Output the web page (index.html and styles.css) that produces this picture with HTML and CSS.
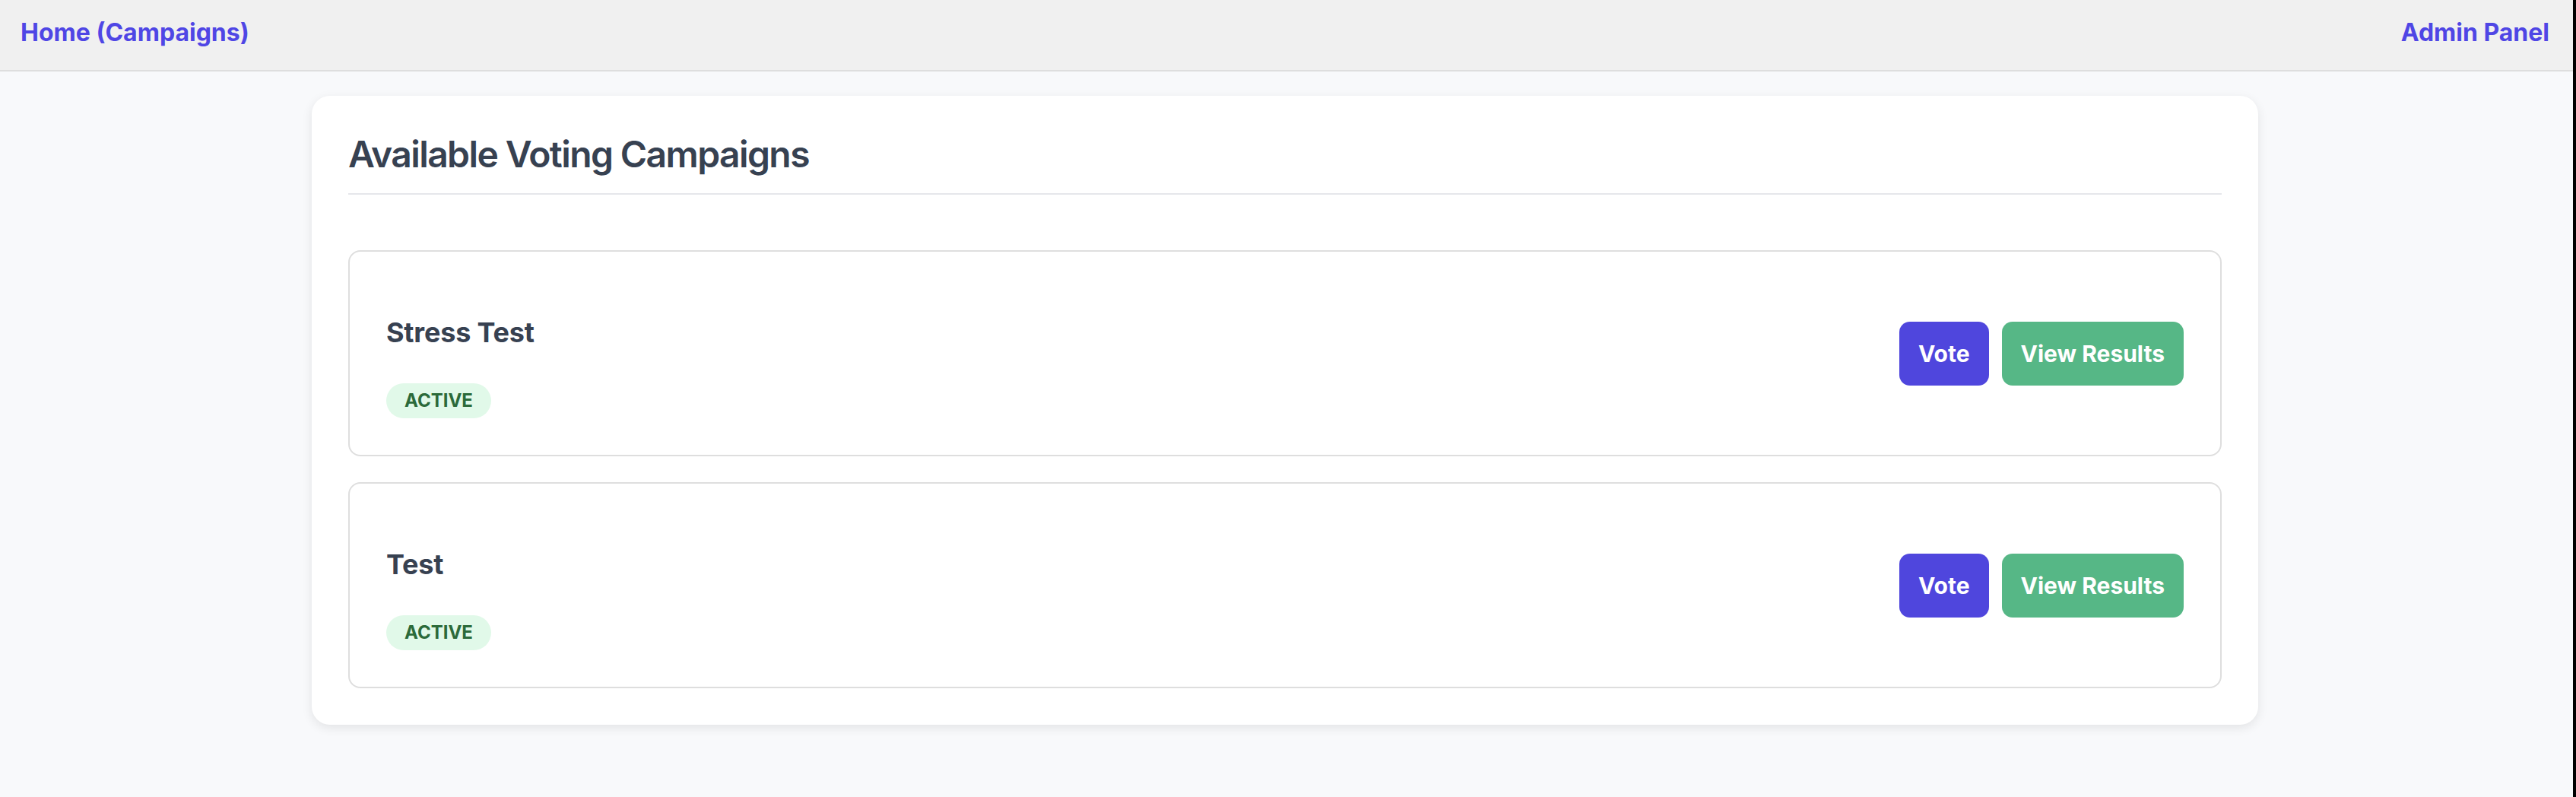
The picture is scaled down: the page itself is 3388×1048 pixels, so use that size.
FILE: index.html
```html
<!DOCTYPE html>
<html lang="en">
<head>
<meta charset="utf-8">
<title>Available Voting Campaigns</title>
<link rel="stylesheet" href="styles.css">
</head>
<body>
<nav class="topnav">
  <a class="nav-link" href="#">Home (Campaigns)</a>
  <a class="nav-link" href="#">Admin Panel</a>
</nav>
<main class="main">
  <section class="card">
    <h2 class="card-title">Available Voting Campaigns</h2>
    <ul class="campaign-list">
      <li class="campaign">
        <div class="campaign-info">
          <h3 class="campaign-name">Stress Test</h3>
          <span class="badge">ACTIVE</span>
        </div>
        <div class="actions">
          <button class="btn btn-vote">Vote</button>
          <button class="btn btn-results">View Results</button>
        </div>
      </li>
      <li class="campaign">
        <div class="campaign-info">
          <h3 class="campaign-name">Test</h3>
          <span class="badge">ACTIVE</span>
        </div>
        <div class="actions">
          <button class="btn btn-vote">Vote</button>
          <button class="btn btn-results">View Results</button>
        </div>
      </li>
    </ul>
  </section>
</main>
</body>
</html>
```
FILE: styles.css
```css
html {
  background: #000;
}
body {
  margin: 0 4px 0 0;
  min-height: 100vh;
  background: #f8f9fb;
  font-family: Inter, "Noto Sans", sans-serif;
}
.topnav {
  box-sizing: border-box;
  height: 94px;
  display: flex;
  justify-content: space-between;
  align-items: flex-start;
  padding: 23px 31px 0 27px;
  background: #f0f0f0;
  border-bottom: 2px solid #dedede;
}
.nav-link {
  font-size: 32px;
  line-height: 39px;
  font-weight: 700;
  color: #4f46e5;
  text-decoration: none;
}
.main {
  padding: 32px 4px 0 0;
}
.card {
  box-sizing: border-box;
  width: 2560px;
  margin: 0 auto;
  background: #fff;
  border-radius: 24px;
  padding: 48px;
  box-shadow: 0 4px 14px rgba(0, 0, 0, 0.09);
}
.card-title {
  margin: 0;
  font-size: 48px;
  line-height: 58px;
  font-weight: 600;
  letter-spacing: -1.6px;
  color: #374151;
  padding-bottom: 22px;
  border-bottom: 2px solid #e5e7eb;
}
.campaign-list {
  list-style: none;
  margin: 73px 0 0;
  padding: 0;
  display: flex;
  flex-direction: column;
  gap: 34px;
}
.campaign {
  box-sizing: border-box;
  height: 271px;
  display: flex;
  justify-content: space-between;
  align-items: center;
  padding: 0 48px;
  border: 2px solid #dedede;
  border-radius: 16px;
}
.campaign-info {
  display: flex;
  flex-direction: column;
  align-items: flex-start;
  padding-top: 36px;
}
.campaign-name {
  margin: 0 0 45px;
  font-size: 36px;
  line-height: 44px;
  font-weight: 700;
  letter-spacing: -0.2px;
  color: #374151;
}
.badge {
  display: inline-block;
  height: 46px;
  line-height: 46px;
  padding: 0 24px;
  border-radius: 23px;
  background: #e1f9e9;
  color: #2b6a3a;
  font-size: 24px;
  font-weight: 700;
}
.actions {
  display: flex;
  gap: 17px;
}
.btn {
  font-family: Inter, "Noto Sans", sans-serif;
  font-size: 30px;
  line-height: 40px;
  font-weight: 700;
  color: #fff;
  border: none;
  border-radius: 14px;
  padding: 22px 25px;
  cursor: pointer;
}
.btn-vote {
  background: #4f46dd;
}
.btn-results {
  background: #56b786;
}
```
